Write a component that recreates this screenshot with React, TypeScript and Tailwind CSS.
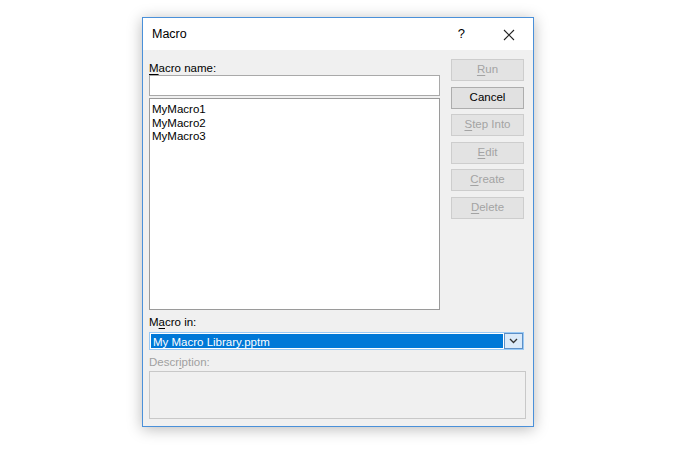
import React from "react";

const font = { fontFamily: '"Liberation Sans", Arial, sans-serif' };

// underlines the mnemonic letter at index k
const Mn = ({ text, k }: { text: string; k: number }) => (
  <>
    {text.slice(0, k)}
    <span className="underline underline-offset-2">{text[k]}</span>
    {text.slice(k + 1)}
  </>
);

const Btn = ({ text, k, disabled }: { text: string; k: number; disabled?: boolean }) => (
  <div
    className={
      "h-[22px] w-[73px] flex items-center justify-center border text-[11.5px] " +
      (disabled
        ? "border-[#cdcdcd] bg-[#e3e3e3] text-[#a3a3a3]"
        : "border-[#adadad] bg-[#e1e1e1] text-black")
    }
  >
    {k >= 0 ? <Mn text={text} k={k} /> : text}
  </div>
);

export default function App() {
  return (
    <div className="w-[700px] h-[450px] bg-white pt-[17px] pl-[142px]" style={font}>
      <div className="w-[392px] h-[410px] border border-[#4a90d9] bg-[#f0f0f0] shadow-[0_2px_14px_rgba(0,0,0,0.28)] flex flex-col">
        {/* title bar */}
        <div className="h-[32px] bg-white flex items-center pl-[9px] pr-[18px]">
          <span className="text-[12.5px] text-black flex-1">Macro</span>
          <span className="text-[13px] text-black mr-[38px]">?</span>
          <svg width="12" height="12" viewBox="0 0 12 12" className="mt-[1px]">
            <path d="M1 1 L11 11 M11 1 L1 11" stroke="#222" strokeWidth="1.1" />
          </svg>
        </div>

        <div className="flex-1 px-[6px]">
          <div className="flex">
            {/* left column */}
            <div className="w-[291px] flex flex-col">
              <div className="h-[14px] mt-[11px] text-[11.5px] leading-[14px] text-black">
                <Mn text="Macro name:" k={0} />
              </div>
              <div className="h-[21px] bg-white border border-[#a9a9a9]" />
              <div className="h-[212px] mt-[2px] bg-white border border-[#9a9a9a] pt-[4px] pl-[2px] text-[11.5px] leading-[13.5px] text-black">
                <div>MyMacro1</div>
                <div>MyMacro2</div>
                <div>MyMacro3</div>
              </div>
            </div>
            {/* buttons */}
            <div className="ml-[11px] pt-[9px] flex flex-col gap-[5.5px]">
              <Btn text="Run" k={0} disabled />
              <Btn text="Cancel" k={-1} />
              <Btn text="Step Into" k={0} disabled />
              <Btn text="Edit" k={0} disabled />
              <Btn text="Create" k={0} disabled />
              <Btn text="Delete" k={0} disabled />
            </div>
          </div>

          <div className="h-[14px] mt-[5px] text-[11.5px] leading-[14px] text-black">
            <Mn text="Macro in:" k={1} />
          </div>
          <div className="mt-[3px] h-[18px] w-[375px] flex border border-[#99c9f5] bg-white">
            <div className="flex-1 bg-[#0078d7] text-white text-[11.5px] leading-[16px] pl-[2px] m-px">
              My Macro Library.pptm
            </div>
            <div className="w-[19px] h-[16px] border border-[#5c8fc7] bg-[#dbeaf9] flex items-center justify-center">
              <svg width="9" height="6" viewBox="0 0 9 6">
                <path d="M1 1 L4.5 4.5 L8 1" stroke="#333" strokeWidth="1.3" fill="none" />
              </svg>
            </div>
          </div>
          <div className="h-[14px] mt-[5px] text-[11.5px] leading-[14px] text-[#a0a0a0]">
            <Mn text="Description:" k={5} />
          </div>
          <div className="mt-[2px] h-[48px] w-[377px] border border-[#c8c8c8] bg-[#f0f0f0]" />
        </div>
      </div>
    </div>
  );
}
